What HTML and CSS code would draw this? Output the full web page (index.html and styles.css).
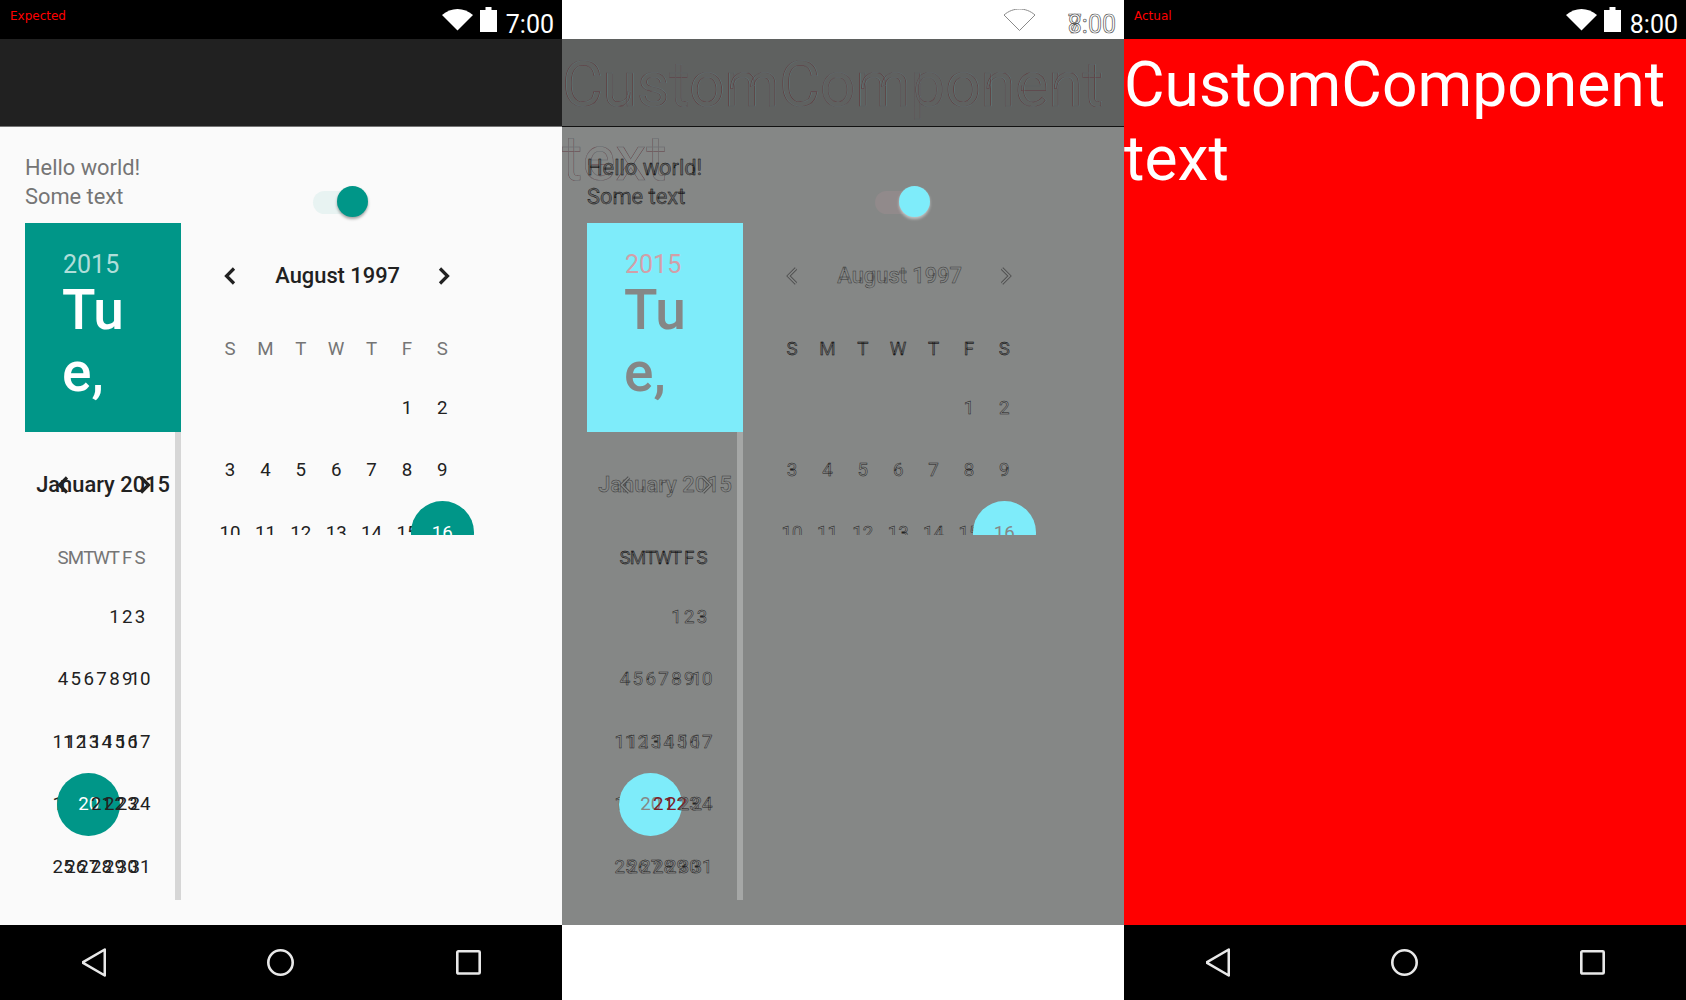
FILE: index.html
```html
<!DOCTYPE html>
<html lang="en">
<head>
    <meta charset="UTF-8">
    <title>Screenshot test: Expected / Diff / Actual</title>
    <link rel="stylesheet" href="styles.css">
</head>
<body>

    <!-- Expected -->
    <section class="panel">
        <div class="status">
            <span class="status-label">Expected</span>
            <svg class="wifi" viewBox="0 0 31 22"><path d="M15.5 21.5 0 6C9-2 22-2 31 6Z"/></svg>
            <svg class="battery" viewBox="0 0 17 25"><path d="M5.5 0h6v3h5.500v22H0V3h5.500z"/></svg>
            <span class="time">7:00</span>
        </div>
        <div class="toolbar"></div>
        <div class="content">
            <div class="intro">
                <p class="hello">Hello world!<br>Some text</p>
                <div class="switch"><span class="thumb"></span></div>
            </div>
            <div class="pickers">
                <div class="picker-left">
                    <div class="date-header">
                        <div class="date-year">2015</div>
                        <div class="date-day">Tu<br>e,</div>
                    </div>
                    <div class="cal cal-small">
                        <div class="month">
                            <span class="month-title">January 2015</span>
                            <svg class="chev chev-prev" viewBox="0 0 12 18"><path d="M10 1.500 2.500 9l7.500 7.500"/></svg>
                            <svg class="chev chev-next" viewBox="0 0 12 18"><path d="M2 1.500 9.500 9 2 16.500"/></svg>
                        </div>
                        <div class="labels"><span>S</span><span>M</span><span>T</span><span>W</span><span>T</span><span>F</span><span>S</span></div>
                        <div class="days">
                            <span></span><span></span><span></span><span></span><span>1</span><span>2</span><span>3</span>
                            <span>4</span><span>5</span><span>6</span><span>7</span><span>8</span><span>9</span><span>10</span>
                            <span>11</span><span>12</span><span>13</span><span>14</span><span>15</span><span>16</span><span>17</span>
                            <span>18</span><span>19</span><span class="selected">20</span><span>21</span><span>22</span><span>23</span><span>24</span>
                            <span>25</span><span>26</span><span>27</span><span>28</span><span>29</span><span>30</span><span>31</span>
                        </div>
                    </div>
                </div>
                <div class="cal cal-big">
                    <div class="month">
                        <span class="month-title">August 1997</span>
                        <svg class="chev chev-prev" viewBox="0 0 12 18"><path d="M10 1.500 2.500 9l7.500 7.500"/></svg>
                        <svg class="chev chev-next" viewBox="0 0 12 18"><path d="M2 1.500 9.500 9 2 16.500"/></svg>
                    </div>
                    <div class="labels"><span>S</span><span>M</span><span>T</span><span>W</span><span>T</span><span>F</span><span>S</span></div>
                    <div class="days">
                        <span></span><span></span><span></span><span></span><span></span><span>1</span><span>2</span>
                        <span>3</span><span>4</span><span>5</span><span>6</span><span>7</span><span>8</span><span>9</span>
                        <span>10</span><span>11</span><span>12</span><span>13</span><span>14</span><span>15</span><span class="selected">16</span>
                    </div>
                </div>
            </div>
        </div>
        <div class="nav">
            <div class="nav-item"><svg class="nav-back" viewBox="0 0 24 29"><path d="M22.800 1.500V27.500L.6 14.500Z"/></svg></div>
            <div class="nav-item"><svg class="nav-home" viewBox="0 0 27 27"><circle cx="13.500" cy="13.500" r="12.200"/></svg></div>
            <div class="nav-item"><svg class="nav-recent" viewBox="0 0 25 25"><rect x="1.300" y="1.300" width="22.400" height="22.200" rx="1"/></svg></div>
        </div>
    </section>

    <!-- Diff -->
    <section class="panel panel-diff">
        <div class="status">
            <svg class="wifi" viewBox="0 0 31 22"><path d="M15.5 21.5 0 6C9-2 22-2 31 6Z"/></svg>
            <span class="battery-gap"></span>
            <span class="time"><span class="time-over">8</span>7:00</span>
        </div>
        <div class="toolbar"></div>
        <div class="content">
            <div class="intro">
                <p class="hello">Hello world!<br>Some text</p>
                <div class="switch"><span class="thumb"></span></div>
            </div>
            <div class="pickers">
                <div class="picker-left">
                    <div class="date-header">
                        <div class="date-year">2015</div>
                        <div class="date-day">Tu<br>e,</div>
                    </div>
                    <div class="cal cal-small">
                        <div class="month">
                            <span class="month-title">January 2015</span>
                            <svg class="chev chev-prev" viewBox="0 0 12 18"><path d="M10 1.500 2.500 9l7.500 7.500"/><path class="chev-inner" d="M10 1.500 2.500 9l7.500 7.500"/></svg>
                            <svg class="chev chev-next" viewBox="0 0 12 18"><path d="M2 1.500 9.500 9 2 16.500"/><path class="chev-inner" d="M2 1.500 9.500 9 2 16.500"/></svg>
                        </div>
                        <div class="labels"><span>S</span><span>M</span><span>T</span><span>W</span><span>T</span><span>F</span><span>S</span></div>
                        <div class="days">
                            <span></span><span></span><span></span><span></span><span>1</span><span>2</span><span>3</span>
                            <span>4</span><span>5</span><span>6</span><span>7</span><span>8</span><span>9</span><span>10</span>
                            <span>11</span><span>12</span><span>13</span><span>14</span><span>15</span><span>16</span><span>17</span>
                            <span>18</span><span>19</span><span class="selected">20</span><span>21</span><span>22</span><span>23</span><span>24</span>
                            <span>25</span><span>26</span><span>27</span><span>28</span><span>29</span><span>30</span><span>31</span>
                        </div>
                    </div>
                </div>
                <div class="cal cal-big">
                    <div class="month">
                        <span class="month-title">August 1997</span>
                        <svg class="chev chev-prev" viewBox="0 0 12 18"><path d="M10 1.500 2.500 9l7.500 7.500"/><path class="chev-inner" d="M10 1.500 2.500 9l7.500 7.500"/></svg>
                        <svg class="chev chev-next" viewBox="0 0 12 18"><path d="M2 1.500 9.500 9 2 16.500"/><path class="chev-inner" d="M2 1.500 9.500 9 2 16.500"/></svg>
                    </div>
                    <div class="labels"><span>S</span><span>M</span><span>T</span><span>W</span><span>T</span><span>F</span><span>S</span></div>
                    <div class="days">
                        <span></span><span></span><span></span><span></span><span></span><span>1</span><span>2</span>
                        <span>3</span><span>4</span><span>5</span><span>6</span><span>7</span><span>8</span><span>9</span>
                        <span>10</span><span>11</span><span>12</span><span>13</span><span>14</span><span>15</span><span class="selected">16</span>
                    </div>
                </div>
            </div>
        </div>
        <div class="custom-text custom-over">CustomComponent<br>text</div>
        <div class="nav"></div>
    </section>

    <!-- Actual -->
    <section class="panel panel-actual">
        <div class="status">
            <span class="status-label">Actual</span>
            <svg class="wifi" viewBox="0 0 31 22"><path d="M15.5 21.5 0 6C9-2 22-2 31 6Z"/></svg>
            <svg class="battery" viewBox="0 0 17 25"><path d="M5.5 0h6v3h5.500v22H0V3h5.500z"/></svg>
            <span class="time">8:00</span>
        </div>
        <div class="content">
            <div class="custom-text">CustomComponent<br>text</div>
        </div>
        <div class="nav">
            <div class="nav-item"><svg class="nav-back" viewBox="0 0 24 29"><path d="M22.800 1.500V27.500L.6 14.500Z"/></svg></div>
            <div class="nav-item"><svg class="nav-home" viewBox="0 0 27 27"><circle cx="13.500" cy="13.500" r="12.200"/></svg></div>
            <div class="nav-item"><svg class="nav-recent" viewBox="0 0 25 25"><rect x="1.300" y="1.300" width="22.400" height="22.200" rx="1"/></svg></div>
        </div>
    </section>

</body>
</html>
```

FILE: styles.css
```css
body {
    margin: 0;
    display: flex;
    height: 1000px;
    overflow: hidden;
    font-family: Roboto, sans-serif;
}
p {
    margin: 0;
}

.panel {
    position: relative;
    width: 562px;
    height: 1000px;
    display: flex;
    flex-direction: column;
    overflow: hidden;
    background: #fafafa;
}

/* status bar */
.status {
    height: 39px;
    flex: none;
    display: flex;
    align-items: center;
    padding: 0 8px 0 10px;
    background: #000;
}
.status-label {
    margin-right: auto;
    margin-top: -7px;
    font-family: "DejaVu Sans", sans-serif;
    font-size: 12px;
    color: #f00;
}
.wifi {
    width: 31px;
    height: 22px;
    margin-top: 1px;
    fill: #fff;
}
.battery {
    width: 17px;
    height: 25px;
    margin-left: 7px;
    fill: #fff;
}
.battery-gap {
    width: 17px;
    margin-left: 7px;
}
.time {
    position: relative;
    margin-left: 9px;
    margin-top: 10px;
    font-size: 25px;
    color: #fff;
}

.toolbar {
    height: 86.5px;
    flex: none;
    background: #212121;
    border-bottom: 1.5px solid #757575;
}

/* main content */
.content {
    flex: 1;
    min-height: 0;
    padding: 26px 0 0 25px;
}
.intro {
    display: flex;
    align-items: flex-end;
    padding-bottom: 12.3px;
}
.hello {
    width: 156px;
    font-size: 21.85px;
    line-height: 29.3px;
    color: #757575;
}
.switch {
    position: relative;
    width: 49px;
    height: 23px;
    margin: 0 0 -2.5px 132px;
    border-radius: 12px;
    background: #e8f3f2;
}
.thumb {
    position: absolute;
    right: -6px;
    top: -4.5px;
    width: 31px;
    height: 31px;
    border-radius: 50%;
    background: #009688;
    box-shadow: 0 2px 3px rgba(0, 0, 0, 0.35);
}

.pickers {
    display: flex;
    align-items: flex-start;
}
.picker-left {
    width: 156px;
    flex: none;
}
.date-header {
    height: 209px;
    box-sizing: border-box;
    padding: 26.5px 0 0 38px;
    background: #009688;
    color: #fff;
}
.date-year {
    font-size: 25px;
    color: rgba(255, 255, 255, 0.7);
}
.date-day {
    margin-left: -1px;
    font-size: 55px;
    font-weight: 500;
    line-height: 62.5px;
}

/* calendars */
.cal {
    --col: 12.85px;
    box-sizing: border-box;
    padding-top: 7.5px;
}
.cal-small {
    height: 468px;
    padding-left: 31.6px;
    border-right: 6px solid #d6d6d6;
}
.cal-big {
    --col: 35.4px;
    height: 312px;
    margin-left: 31.3px;
    overflow: hidden;
    flex: 1;
}
.month,
.labels,
.days {
    display: grid;
    grid-template-columns: repeat(7, var(--col));
}
.month {
    height: 90px;
    align-items: center;
}
.month-title {
    grid-row: 1;
    grid-column: 1 / 8;
    justify-self: center;
    margin-left: 3px;
    white-space: nowrap;
    font-size: 21.85px;
    font-weight: 500;
    color: #212121;
}
.chev {
    grid-row: 1;
    justify-self: center;
    width: 12px;
    height: 18px;
    fill: none;
    stroke: #212121;
    stroke-width: 3.2;
}
.chev-inner {
    display: none;
}
.chev-prev {
    grid-column: 1;
}
.chev-next {
    grid-column: 7;
    margin-left: 4px;
}
.cal-small .chev-next {
    margin-left: 10px;
}
.labels span,
.days span {
    display: flex;
    justify-content: center;
    align-items: center;
    white-space: nowrap;
    font-size: 18.7px;
}
.labels span {
    height: 55.6px;
    color: #757575;
}
.days span {
    position: relative;
    height: 62.5px;
    color: #212121;
}
.days .selected {
    z-index: 0;
    color: #fff;
}
/* circle is wider than the column, it overlaps neighbours */
.selected::before {
    content: "";
    position: absolute;
    left: 50%;
    top: 50%;
    width: 62.6px;
    height: 62.6px;
    margin: -31.3px 0 0 -31.3px;
    border-radius: 50%;
    background: #009688;
    z-index: -1;
}

/* nav bar */
.nav {
    height: 75px;
    flex: none;
    display: flex;
    background: #000;
}
.nav-item {
    flex: 1;
    display: flex;
    align-items: center;
    justify-content: center;
}
.nav-item svg {
    fill: none;
    stroke: #e8e8e8;
    stroke-width: 2.6;
    stroke-linejoin: round;
}
.nav-back {
    width: 24px;
    height: 29px;
}
.nav-home {
    width: 27px;
    height: 27px;
}
.nav-recent {
    width: 25px;
    height: 25px;
}

/* red actual panel */
.panel-actual .content {
    padding: 8.5px 0 0;
    background: #f00;
}
.custom-text {
    font-size: 62.4px;
    line-height: 74px;
    color: #fff;
}

/* diff panel, colours are the inverted difference */
.panel-diff {
    background: #858786;
}
.panel-diff .status,
.panel-diff .nav {
    background: #fff;
}
.panel-diff .wifi {
    margin-left: auto;
    fill: none;
    stroke: #8a8a8a;
    stroke-width: 1;
}
.panel-diff .time {
    color: #fff;
    -webkit-text-stroke: 0.7px #555;
}
.time-over {
    position: absolute;
    left: 0;
    top: 0;
}
.panel-diff .toolbar {
    background: #5f6160;
    border-bottom-color: #111;
}
.custom-over {
    position: absolute;
    left: 0;
    top: 47.5px;
    color: transparent;
    -webkit-text-stroke: 0.6px rgba(100, 20, 25, 0.6);
}
/* second edge of the ghost text, the cyan side of the diff */
.custom-over::before {
    content: "CustomComponent\A text";
    position: absolute;
    left: 0.4px;
    top: 0;
    white-space: pre;
    -webkit-text-stroke: 0.4px rgba(90, 225, 235, 0.3);
}
.panel-diff .hello {
    position: relative;
    z-index: 1;
}
.panel-diff .hello,
.panel-diff .labels span {
    color: #666;
    -webkit-text-stroke: 0.4px #000;
}
.panel-diff .switch {
    background: #918a8b;
}
.panel-diff .thumb {
    background: #7eecfa;
    box-shadow: 0 2px 3px rgba(255, 255, 255, 0.5);
}
.panel-diff .date-header {
    background: #7eecfa;
    color: #858786;
}
.panel-diff .date-year {
    color: #d29fa8;
}
.panel-diff .cal-small {
    border-right-color: #a5a7a6;
}
.panel-diff .month-title {
    color: #858786;
    -webkit-text-stroke: 0.5px #3a3a3a;
}
.panel-diff .days span {
    color: #8f8f8f;
    -webkit-text-stroke: 0.5px #222;
}
.panel-diff .chev {
    stroke: #4c4c4c;
}
.panel-diff .chev-inner {
    display: inline;
    stroke: #858786;
    stroke-width: 1.7;
}
.panel-diff .days .selected {
    color: #858786;
    -webkit-text-stroke: 0;
}
.panel-diff .selected::before {
    background: #7eecfa;
}
.panel-diff .cal-small .selected + span,
.panel-diff .cal-small .selected + span + span {
    color: #7a2028;
    -webkit-text-stroke: 0;
}
```
